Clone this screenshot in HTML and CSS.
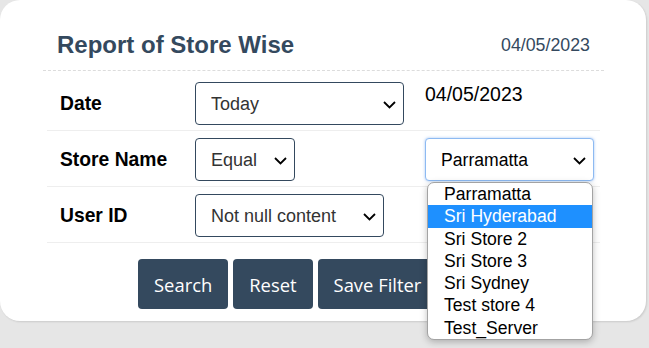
FILE: index.html
```html
<!DOCTYPE html>
<html lang="en">
<head>
  <meta charset="UTF-8">
  <title>Report of Store Wise</title>
  <link rel="stylesheet" href="styles.css">
</head>
<body>

  <div class="card">
    <div class="card-head">
      <h2 class="title">Report of Store Wise</h2>
      <span class="today">04/05/2023</span>
    </div>

    <!-- filters -->
    <div class="filters">
      <div class="row first">
        <label class="lbl">Date</label>
        <div class="cell">
          <span class="sel">
            <select class="w-period"><option>Today</option></select>
            <svg class="chev" width="13" height="8" viewBox="0 0 13 8"><path d="M1 1l5.5 5.5L12 1" fill="none" stroke="#000" stroke-width="1.8"/></svg>
          </span>
        </div>
        <div class="extra">04/05/2023</div>
      </div>

      <div class="row">
        <label class="lbl">Store Name</label>
        <div class="cell">
          <span class="sel">
            <select class="w-op"><option>Equal</option></select>
            <svg class="chev" width="13" height="8" viewBox="0 0 13 8"><path d="M1 1l5.5 5.5L12 1" fill="none" stroke="#000" stroke-width="1.8"/></svg>
          </span>
        </div>
        <div class="cell">
          <span class="sel">
            <select class="w-store focus"><option>Parramatta</option></select>
            <svg class="chev" width="13" height="8" viewBox="0 0 13 8"><path d="M1 1l5.5 5.5L12 1" fill="none" stroke="#000" stroke-width="1.8"/></svg>
          </span>
        </div>
      </div>

      <div class="row">
        <label class="lbl">User ID</label>
        <div class="cell">
          <span class="sel">
            <select class="w-user"><option>Not null content</option></select>
            <svg class="chev" width="13" height="8" viewBox="0 0 13 8"><path d="M1 1l5.5 5.5L12 1" fill="none" stroke="#000" stroke-width="1.8"/></svg>
          </span>
        </div>
        <div class="cell"></div>
      </div>
    </div>

    <div class="actions">
      <button class="btn">Search</button>
      <button class="btn">Reset</button>
      <button class="btn">Save Filter</button>
    </div>

    <!-- open store list -->
    <ul class="dropdown">
      <li>Parramatta</li>
      <li class="hl">Sri Hyderabad</li>
      <li>Sri Store 2</li>
      <li>Sri Store 3</li>
      <li>Sri Sydney</li>
      <li>Test store 4</li>
      <li>Test_Server</li>
    </ul>
  </div>

</body>
</html>
```

FILE: styles.css
```css
html {
  background: #e6e6e6;
}

body {
  margin: 0;
  min-height: 348px;
  background: #e6e6e6;
  font-family: 'Liberation Sans', Arial, sans-serif;
  color: #000;
}

.card {
  position: relative;
  width: 646px;
  height: 321px;
  box-sizing: border-box;
  padding: 0 42px 0 43px;
  background: #fff;
  border-radius: 20px;
  box-shadow: 1px 1px 2px rgba(0,0,0,0.12);
}

.card-head {
  display: flex;
  justify-content: space-between;
  align-items: baseline;
  padding: 31px 14px 11px;
  border-bottom: 1px dashed #dcdcdc;
}

.title {
  margin: 0;
  font-size: 24px;
  line-height: 28px;
  color: #34495e;
}

.today {
  font-size: 17.8px;
  color: #34495e;
  position: relative;
  top: -2px;
}

.filters {
  margin: 0 4px;
}

.row {
  display: grid;
  grid-template-columns: 148px 230px 1fr;
  align-items: center;
  padding: 7px 0 5px;
  border-bottom: 1px solid #eeeeee;
}

.row.first {
  padding: 11px 0 5px;
}

.lbl {
  padding-left: 13px;
  font-size: 19.3px;
  font-weight: bold;
}

.extra {
  align-self: start;
  font-size: 19.5px;
  line-height: 22px;
  padding-top: 1px;
}

.sel {
  position: relative;
  display: inline-block;
  vertical-align: top;
}

select {
  appearance: none;
  -webkit-appearance: none;
  display: block;
  height: 43px;
  box-sizing: border-box;
  padding: 0 28px 0 15px;
  background: #fff;
  border: 1px solid #34495e;
  border-radius: 4px;
  font-family: 'Liberation Sans', Arial, sans-serif;
  font-size: 18px;
  color: #333;
}

select.focus {
  border-color: #8dbaf2;
  box-shadow: 0 0 3px rgba(90,150,235,0.55);
  color: #000;
  font-size: 17.6px;
}

.w-period { width: 209px; }
.w-op { width: 100px; }
.w-store { width: 169px; }
.w-user { width: 189px; }

.chev {
  position: absolute;
  right: 8px;
  top: 50%;
  margin-top: -3px;
  pointer-events: none;
}

.actions {
  display: flex;
  gap: 5px;
  margin: 16px 0 0 95px;
}

.btn {
  height: 50px;
  padding: 0 16px;
  background: #34495e;
  color: #fff;
  border: none;
  border-radius: 4px;
  font-family: 'Open Sans', sans-serif;
  font-size: 18.4px;
  cursor: pointer;
}

.dropdown {
  position: absolute;
  z-index: 10;
  left: 427px;
  top: 182px;
  width: 166px;
  box-sizing: border-box;
  margin: 0;
  padding: 0;
  list-style: none;
  background: #fff;
  border: 1px solid #a3a3a3;
  border-radius: 7px;
  box-shadow: 0 2px 7px rgba(0,0,0,0.25);
}

.dropdown li {
  padding-left: 16px;
  font-size: 17.6px;
  line-height: 22.3px;
  white-space: nowrap;
}

.dropdown li.hl {
  background: #1e90ff;
  color: #fff;
}
```
